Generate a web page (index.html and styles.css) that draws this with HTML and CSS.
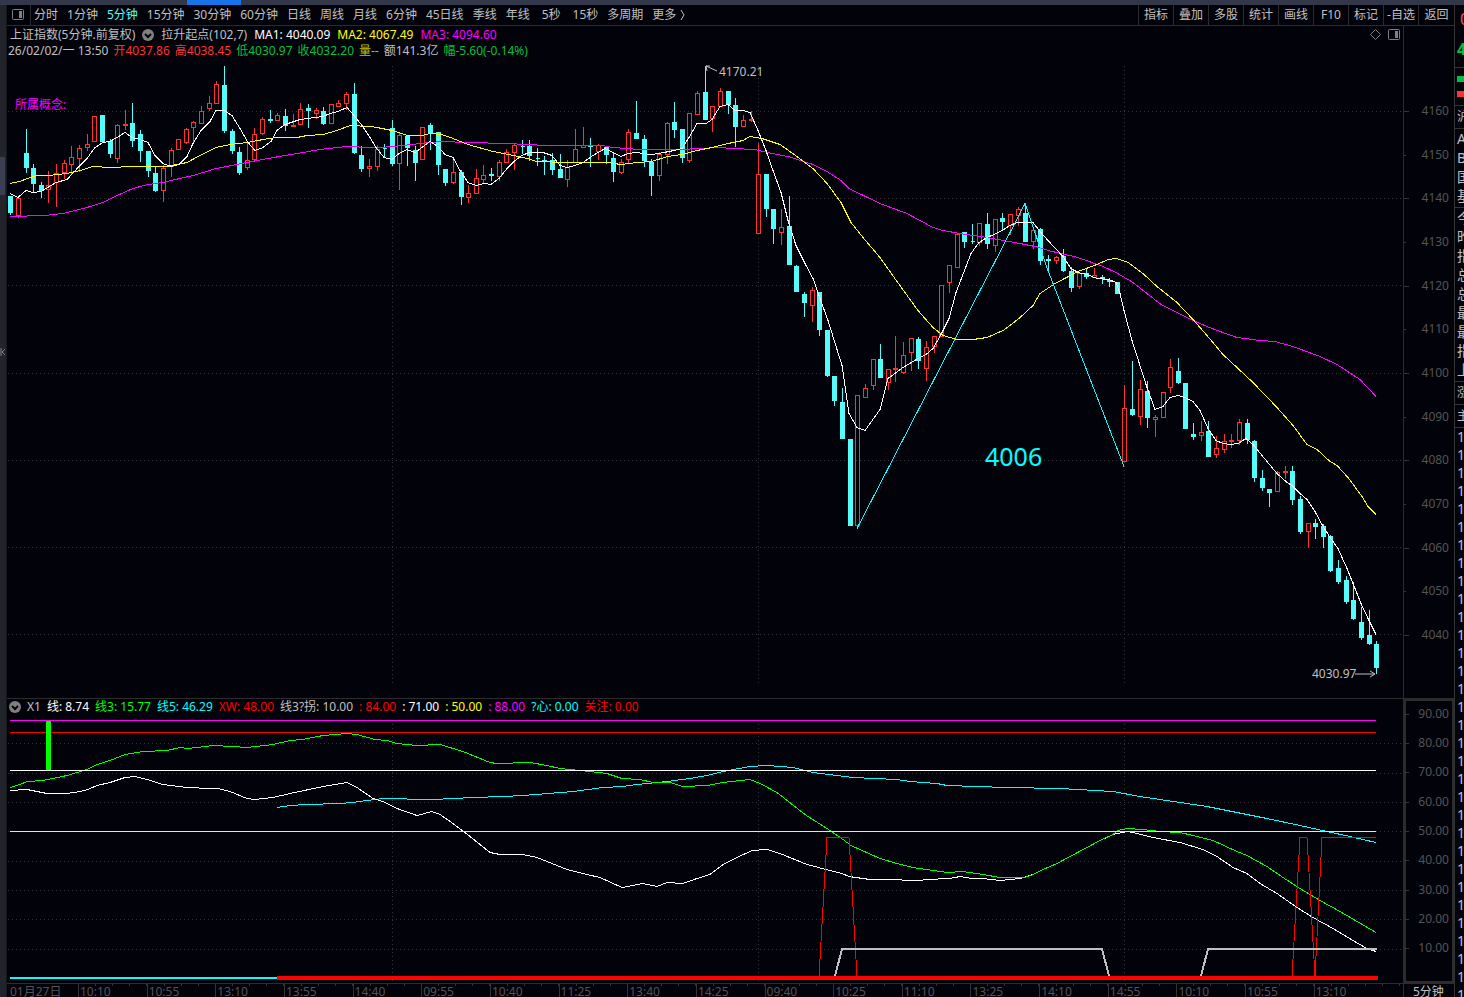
FILE: index.html
```html
<!doctype html>
<html lang="zh-CN">

<head>
    <meta charset="utf-8">
    <title>上证指数 5分钟</title>
    <link rel="stylesheet" href="styles.css">
</head>

<body>
    <div class="tabstrip"><div class="tabstrip_active"></div></div>
    <div class="layout">
        <div class="rail">
            <div class="rail_handle"></div>
            <svg class="rail_close" viewBox="0 0 6 8"><path d="M1 0v8M5 1L2 4l3 3"/></svg>
        </div>

        <main class="main">
            <nav class="toolbar">
                <button class="panel_toggle" aria-label="侧栏">
                    <svg width="12" height="12" viewBox="0 0 12 12"><rect x=".5" y=".5" width="11" height="10" rx="1"/><rect class="fill" x="7" y="2" width="3" height="7"/></svg>
                </button>
                <div class="periods">
                    <button>分时</button>
                    <button>1分钟</button>
                    <button class="active">5分钟</button>
                    <button>15分钟</button>
                    <button>30分钟</button>
                    <button>60分钟</button>
                    <button>日线</button>
                    <button>周线</button>
                    <button>月线</button>
                    <button>6分钟</button>
                    <button>45日线</button>
                    <button>季线</button>
                    <button>年线</button>
                    <button class="seconds">5秒</button>
                    <button class="seconds">15秒</button>
                    <button>多周期</button>
                    <button class="more">更多<svg width="5" height="10" viewBox="0 0 5 10"><path d="M1 0l3 5-3 5"/></svg></button>
                </div>
                <div class="tools">
                    <button>指标</button>
                    <button>叠加</button>
                    <button>多股</button>
                    <button>统计</button>
                    <button>画线</button>
                    <button>F10</button>
                    <button>标记</button>
                    <button>-自选</button>
                    <button>返回</button>
                </div>
            </nav>

            <section class="pane">
                <div class="plot">
                    <div class="info">
                        <div class="info_row title_row">
                            <span>上证指数(5分钟.前复权)</span>
                            <svg class="drop" width="12" height="12" viewBox="0 0 12 12"><circle cx="6" cy="6" r="6"/><path d="M3 5l3 3 3-3"/></svg>
                            <span class="study">拉升起点(102,7)</span>
                            <span class="white">MA1: 4040.09</span>
                            <span class="yellow">MA2: 4067.49</span>
                            <span class="magenta">MA3: 4094.60</span>
                            <span class="info_icons">
                                <svg width="11" height="11" viewBox="0 0 11 11"><path d="M5.5 .5l5 5-5 5-5-5z"/></svg>
                                <svg width="12" height="12" viewBox="0 0 12 12"><rect x=".5" y=".5" width="11" height="10" rx="1"/><rect class="fill" x="7" y="2" width="3" height="7"/></svg>
                            </span>
                        </div>
                        <div class="info_row quote_row">
                            <span>26/02/02/一 13:50</span>
                            <span class="up">开4037.86</span>
                            <span class="up">高4038.45</span>
                            <span class="down">低4030.97</span>
                            <span class="down">收4032.20</span>
                            <span class="vol">量--</span>
                            <span>额141.3亿</span>
                            <span class="down">幅-5.60(-0.14%)</span>
                        </div>
                    </div>
                    <svg class="chart" id="price" viewBox="7 60 1396 638">
                        <g class="grid"></g>
                        <g class="candles"></g>
                        <g class="lines"></g>
                        <path class="pointer" d="M706 66l11 5M706 66l4 0M706 66l1 5"/>
                        <path class="pointer" d="M1355 674h20M1370 671l5 3-5 3"/>
                        <text class="mark" x="719" y="76">4170.21</text>
                        <text class="mark" x="1312" y="678">4030.97</text>
                        <text class="target" x="985" y="466">4006</text>
                        <text class="concept" x="15" y="109">所属概念:</text>
                    </svg>
                </div>
                <div class="axis price_axis">
                    <span>4160</span><span>4150</span><span>4140</span><span>4130</span><span>4120</span><span>4110</span><span>4100</span><span>4090</span><span>4080</span><span>4070</span><span>4060</span><span>4050</span><span>4040</span>
                </div>
            </section>

            <section class="pane">
                <div class="plot">
                    <div class="info_row study_row">
                        <svg class="drop" width="12" height="12" viewBox="0 0 12 12"><circle cx="6" cy="6" r="6"/><path d="M3 5l3 3 3-3"/></svg>
                        <span>X1</span>
                        <span class="white">线: 8.74</span>
                        <span class="green">线3: 15.77</span>
                        <span class="cyan">线5: 46.29</span>
                        <span class="red">XW: 48.00</span>
                        <span>线3?拐: 10.00</span>
                        <span class="red">: 84.00</span>
                        <span class="white">: 71.00</span>
                        <span class="yellow">: 50.00</span>
                        <span class="magenta">: 88.00</span>
                        <span class="cyan">?心: 0.00</span>
                        <span class="red">关注: 0.00</span>
                    </div>
                    <svg class="chart" id="study" viewBox="7 716 1396 267">
                        <g class="grid"></g>
                        <g class="lines"></g>
                    </svg>
                </div>
                <div class="axis study_axis">
                    <span>90.00</span><span>80.00</span><span>70.00</span><span>60.00</span><span>50.00</span><span>40.00</span><span>30.00</span><span>20.00</span><span>10.00</span>
                </div>
            </section>

            <footer class="times">
                <div class="time_cells">
                    <span>01月27日</span><span>10:10</span><span>10:55</span><span>13:10</span><span>13:55</span><span>14:40</span><span>09:55</span><span>10:40</span><span>11:25</span><span>13:40</span><span>14:25</span><span>09:40</span><span>10:25</span><span>11:10</span><span>13:25</span><span>14:10</span><span>14:55</span><span>10:10</span><span>10:55</span><span>13:10</span>
                </div>
                <div class="period_label">5分钟</div>
            </footer>
        </main>

        <aside class="quotes">
            <div class="q_head"><span class="q_code">0</span><span class="q_last">4</span></div>
            <div class="q_bars"><i class="bar_down"></i><i class="bar_up"></i></div>
            <div class="q_one">沪</div>
            <div class="q_list"><span>A</span><span>B</span><span>国</span><span>基</span></div>
            <div class="q_list"><span>今</span><span>昨</span><span>指</span><span>总</span><span>总</span><span>最</span><span>最</span><span>指</span><span>上</span></div>
            <div class="q_one">涨</div>
            <div class="q_one">主</div>
            <div class="q_ticks" id="ticks"></div>
        </aside>
    </div>
    <script src="chart.js"></script>
</body>

</html>
```

FILE: styles.css
```css
* {
    box-sizing: border-box;
}

body {
    margin: 0;
    height: 100vh;
    overflow: hidden;
    background: #02020a;
    color: #c0c0c0;
    font-family: "Noto Sans", "Noto Sans CJK SC", sans-serif;
    font-size: 12px;
    line-height: 16px;
}

button {
    margin: 0;
    padding: 0;
    border: 0;
    background: none;
    color: inherit;
    font: inherit;
    white-space: nowrap;
}

svg {
    display: block;
    flex: none;
    fill: none;
    stroke: #808080;
}

svg .fill {
    fill: #808080;
    stroke: none;
}

.tabstrip {
    height: 5px;
    padding-left: 187px;
    background: #32384a;
}

.tabstrip_active {
    width: 54px;
    height: 5px;
    background: #1674e6;
}

.layout {
    display: grid;
    grid-template-columns: 7px minmax(0, 1fr) 10px;
}

.rail {
    background: #22242c;
    border-right: 1px solid #18181c;
    overflow: hidden;
}

.rail_handle {
    width: 5px;
    height: 38px;
    margin-top: 152px;
    background: #3a3e52;
}

.rail_close {
    width: 6px;
    height: 8px;
    margin-top: 153px;
}

/* toolbar */
.toolbar {
    display: flex;
    height: 21px;
    border-bottom: 1px solid #2c2c2c;
}

.panel_toggle {
    width: 24px;
    padding-left: 5px;
    border-right: 1px solid #2c2c2c;
}

.periods {
    display: flex;
    gap: 9px;
    padding-left: 3px;
}

.seconds {
    padding-left: 3px;
}

.periods .active {
    color: #54fcfc;
}

.more {
    display: flex;
    align-items: center;
    gap: 4px;
}

.more svg {
    stroke: #c0c0c0;
}

.tools {
    display: flex;
    margin-left: auto;
}

.tools button {
    width: 35px;
    border-left: 1px solid #2c2c2c;
}

.tools button:last-child {
    width: 36px;
}

/* panes */
.pane {
    display: grid;
    grid-template-columns: minmax(0, 1fr) 51px;
    border-bottom: 1px solid #2c2c2c;
}

.info {
    padding-top: 1px;
    height: 34px;
}

.info_row {
    display: flex;
    align-items: center;
    height: 16px;
    white-space: nowrap;
}

.title_row {
    gap: 7px;
    padding-left: 3px;
}

.quote_row {
    gap: 5px;
    padding-left: 1px;
}

.study_row {
    gap: 6px;
    height: 17px;
    padding: 0 0 1px 2px;
}

.drop circle {
    fill: #808080;
    stroke: none;
}

.drop path {
    stroke: #02020a;
    stroke-width: 2;
}

.info_icons {
    display: flex;
    gap: 7px;
    margin-left: auto;
    padding-right: 3px;
}

.white { color: #fff; }
.yellow { color: #ff0; }
.magenta { color: #f0f; }
.green { color: #0f0; }
.cyan { color: #0ff; }
.red { color: #f00; }
.up { color: #ff3232; }
.down { color: #00c040; }
.vol { color: #c0c000; }

.chart {
    width: 100%;
    height: auto;
    shape-rendering: crispEdges;
}

.grid {
    stroke: #343434;
    stroke-dasharray: 1 3;
}

.candles .u {
    stroke: #ff3232;
}

.candles .d {
    stroke: #54fcfc;
    fill: #54fcfc;
}

.pointer {
    stroke: #c0c0c0;
    shape-rendering: auto;
}

.chart text {
    stroke: none;
    fill: #c0c0c0;
}

.chart .target {
    fill: #0ff;
    font-size: 25px;
}

.chart .concept {
    fill: #f0f;
}

.axis {
    display: grid;
    grid-auto-rows: 1fr;
    align-items: center;
    border-left: 1px solid #2c2c2c;
    color: #545454;
    text-align: right;
}

.axis span {
    position: relative;
    padding-right: 5px;
}

.axis span::before {
    content: "";
    position: absolute;
    left: 0;
    top: 8px;
    width: 5px;
    height: 1px;
    background: #343434;
}

.price_axis {
    padding: 63px 0 41px;
}

.price_axis span:nth-child(even)::before {
    width: 2px;
}

.study_axis {
    padding-bottom: 20px;
    box-shadow: inset 0 0 0 2px #2c2c2c;
}

/* time axis */
.times {
    display: grid;
    grid-template-columns: minmax(0, 1fr) 51px;
    color: #545454;
}

.time_cells {
    display: grid;
    grid-template-columns: 71px repeat(18, minmax(0, 1fr)) minmax(0, 1.3fr);
}

.time_cells span {
    padding-left: 1px;
    border-left: 1px solid #343434;
    background: linear-gradient(90deg, transparent 16px, #343434 16px) 0 0 / 17px 2px repeat-x;
}

.time_cells span:first-child {
    padding-left: 3px;
    border: 0;
    background: none;
}

.period_label {
    border-left: 1px solid #2c2c2c;
    padding-left: 9px;
    color: #c0c0c0;
}

/* quote board, only its left edge is on screen */
.quotes {
    height: calc(100vh - 5px);
    overflow: hidden;
    border-left: 1px solid #343434;
    white-space: nowrap;
}

.quotes > div {
    padding-left: 2px;
    border-bottom: 1px solid #343434;
}

.q_head {
    display: grid;
    height: 63px;
    padding-top: 2px;
    font-size: 16px;
    line-height: 25px;
}

.q_code {
    padding-left: 3px;
    color: #ff5050;
}

.q_last {
    color: #00c040;
    font-weight: bold;
}

.q_bars {
    display: grid;
    gap: 9px;
    height: 38px;
    padding-top: 8px;
    align-content: start;
}

.q_bars i {
    height: 6px;
}

.bar_down {
    background: #00c040;
}

.bar_up {
    background: #ff3232;
}

.q_one {
    height: 23px;
    line-height: 22px;
}

.q_list {
    display: grid;
    padding-bottom: 2px;
    font-size: 14px;
    line-height: 19px;
}

.q_ticks {
    font-size: 14px;
    line-height: 18px;
}

.q_ticks span {
    display: block;
}
```

FILE: chart.js
```javascript
var NS = "http://www.w3.org/2000/svg";

// direction, high, body top, body bottom, low
var candles = `
d 196 196 213 215|u 198 198 216 218|d 129 153 168 173|d 164 168 184 192|d 182 185 191 198|u 171 185 190 203
u 164 173 183 207|u 160 163 173 179|u 146 157 165 174|u 145 148 159 172|u 134 144 148 151|u 116 116 142 142
d 115 115 142 142|d 139 141 154 158|u 124 125 159 163|u 110 124 126 130|d 103 123 141 147|d 130 134 151 162
d 151 151 171 177|d 167 173 191 192|u 165 168 191 202|u 148 150 167 177|u 139 139 150 150|u 128 129 143 144
u 121 122 128 142|u 106 111 124 124|u 96 103 109 111|u 81 84 104 104|d 66 85 131 133|d 129 131 151 154
d 147 152 173 175|u 142 160 168 170|u 128 134 160 161|u 117 119 134 135|d 110 119 121 123|u 113 115 121 121
d 109 116 126 131|u 114 125 127 127|u 103 109 125 125|d 104 108 111 128|u 108 110 114 119|d 107 111 124 125
u 104 104 124 124|u 100 103 107 107|u 92 94 104 110|d 83 94 153 154|d 146 155 169 172|u 159 166 169 177
u 145 149 167 171|d 144 148 149 157|d 120 128 164 166|u 132 135 164 190|d 136 136 148 166|d 146 150 163 181
u 127 127 160 160|d 123 125 133 150|d 132 132 165 175|d 169 169 183 186|u 160 172 183 184|d 170 172 197 205
u 185 193 198 203|u 169 178 194 194|u 165 175 180 183|d 168 174 176 181|u 160 162 177 181|u 149 152 163 163
u 144 145 153 170|d 140 146 147 154|d 140 146 156 161|d 148 158 159 166|d 156 160 162 175|d 153 160 170 175
d 154 169 178 178|u 160 167 180 187|u 129 149 163 163|u 127 145 148 148|d 138 145 147 167|u 144 145 152 160
d 146 147 155 164|d 153 158 172 182|u 159 162 173 174|u 129 132 160 163|d 101 133 139 139|d 135 139 161 167
d 159 162 176 196|u 152 154 176 181|u 122 123 155 164|d 102 122 130 138|d 129 129 158 163|u 113 113 161 163
u 91 93 115 115|d 66 92 120 120|u 106 106 119 132|u 88 91 107 107|d 91 91 105 114|d 98 105 127 147
u 115 120 127 127|u 111 119 121 122|u 143 174 234 234|d 174 174 209 217|d 209 209 229 244|u 209 227 233 245
d 196 226 265 265|d 265 266 292 292|d 292 294 303 317|u 287 290 306 322|d 292 292 330 336|d 330 330 376 377
d 376 376 401 406|d 388 402 439 439|d 439 439 526 526|u 395 395 526 526|u 384 388 398 398|u 359 359 386 390
d 344 359 378 378|u 369 369 383 390|u 336 368 370 382|u 342 355 373 374|u 338 338 353 371|d 337 339 361 369
u 341 347 369 381|u 336 336 347 353|u 285 285 337 337|u 265 265 283 293|u 234 234 268 268|d 232 232 242 248
d 224 241 242 244|u 223 223 243 246|d 213 224 244 249|u 219 219 246 252|d 213 218 222 230|u 214 214 226 235
u 207 209 216 226|d 203 213 242 242|u 230 230 242 249|d 228 229 261 265|d 255 259 261 270|u 256 257 261 264
d 249 256 271 272|d 267 271 288 292|u 272 273 287 289|d 269 273 277 279|u 268 275 278 278|d 275 277 279 284
d 278 280 282 287|d 282 282 294 294|u 385 408 462 462|d 361 409 415 416|u 380 389 417 425|d 381 391 418 428
u 415 417 420 437|u 392 392 418 418|u 359 367 388 393|d 358 371 383 384|d 383 383 429 429|d 423 434 437 440
u 421 432 436 441|d 421 431 457 457|u 436 448 455 458|u 434 441 450 453|u 434 440 442 448|u 419 422 441 445
d 419 423 440 444|d 440 441 478 482|d 470 478 488 491|d 489 489 493 507|u 471 472 492 492|u 466 471 473 479
d 466 471 500 505|d 496 499 532 534|u 523 523 532 548|d 519 523 527 539|d 524 526 537 548|d 535 536 571 572
d 560 568 582 584|d 576 580 602 604|d 582 600 619 620|d 607 622 638 640|d 610 635 644 645|d 641 644 668 674`
    .trim().split(/[|\n]/).map(function (row) { return row.split(" "); });

var priceLines = [
    ["#f0f", "10,216 45,215 63,213 87,207 103,202 117,195 133,188 148,184 163,182 171,180 193,175 203,172 216,168 232,165 257,160 285,155 303,152 320,149 347,146 370,147 380,147 403,145 430,142 442,141 468,142 507,143 547,145 602,145 613,147 640,149 680,149 720,147 732,148 755,149 772,153 788,156 813,164 827,171 841,180 849,188 880,203 907,213 933,227 943,230 960,233 987,237 1020,243 1040,247 1048,250 1078,257 1103,266 1116,272 1133,282 1147,293 1161,304 1173,310 1193,320 1207,326 1220,331 1237,337 1260,340 1275,341 1293,346 1320,356 1337,364 1360,379 1376,396"],
    ["#ff0", "10,183 20,181 27,178 37,175 48,175 67,173 80,170 93,166 110,167 133,166 167,166 187,162 200,155 216,147 230,144 248,142 263,139 277,137 297,137 307,135 323,134 337,130 350,125 370,126 377,127 392,130 408,135 422,135 430,133 442,134 453,138 468,144 493,151 514,155 527,158 537,161 567,162 607,162 621,164 637,162 651,161 668,156 682,154 697,150 712,147 728,143 743,140 750,136 762,138 780,144 797,156 813,168 827,183 841,202 851,222 863,237 880,257 897,281 918,310 933,327 943,335 957,339 973,339 987,337 1003,330 1010,325 1020,317 1033,305 1040,293 1055,283 1078,271 1097,264 1108,259 1117,258 1128,262 1143,273 1157,286 1177,302 1193,319 1207,335 1223,354 1253,382 1277,407 1293,425 1307,444 1317,449 1330,461 1337,465 1348,477 1362,496 1368,506 1376,514"],
    ["#fff", "10,193 18,197 26,190 33,192 41,191 56,182 67,179 79,166 87,158 95,147 103,142 110,141 117,137 125,132 132,137 140,139 148,142 155,155 163,163 171,166 179,164 187,156 193,143 201,130 210,121 216,110 224,110 232,115 240,128 248,142 255,150 263,147 271,141 277,130 285,124 300,119 315,117 323,116 330,113 338,111 347,107 354,115 362,125 370,137 376,147 384,157 392,159 399,153 407,149 415,152 422,147 430,141 438,146 445,154 453,157 460,170 468,182 476,185 484,183 491,184 499,178 507,168 514,161 522,155 529,152 543,152 552,155 560,165 567,167 575,165 583,162 593,155 605,148 613,152 621,156 628,153 636,152 651,154 659,153 674,150 682,148 689,137 697,123 706,123 712,119 720,106 728,104 735,110 743,110 750,112 758,130 766,150 773,170 781,192 788,220 796,245 805,263 813,278 819,295 828,320 842,365 849,413 857,427 865,430 880,409 888,378 903,367 918,358 926,354 933,348 941,334 949,318 956,292 971,253 979,242 987,237 994,234 1002,230 1010,225 1017,222 1033,222 1040,231 1048,240 1063,256 1071,268 1078,272 1087,274 1097,278 1109,279 1116,282 1120,293 1124,310 1132,340 1147,387 1155,409 1163,406 1170,397 1178,395 1185,397 1193,401 1200,410 1208,428 1216,440 1223,443 1231,444 1238,443 1246,438 1254,445 1262,455 1277,473 1287,482 1292,485 1300,493 1307,499 1315,511 1322,524 1330,537 1338,548 1347,568 1353,583 1361,603 1368,618 1376,634"],
    ["#0ff", "857,528 1025,203 1048,270 1124,466"]
];

var studyLines = [
    ["#0ff", "277,807 290,805 307,804 340,803 353,802 367,800 383,798 400,798 413,799 433,799 473,797 503,796 523,795 573,791 603,787 623,786 637,784 667,781 690,778 707,775 723,771 750,766 767,765 793,767 813,772 853,777 897,779 910,781 937,783 947,785 977,786 1007,787 1060,788 1113,791 1140,796 1160,799 1207,806 1267,818 1300,825 1327,831 1350,836 1376,842"],
    ["#fff", "10,790 27,789 47,793 67,793 80,791 88,789 97,785 110,782 125,777 135,776 147,779 163,784 187,787 210,788 218,788 230,791 247,798 255,799 273,797 290,793 323,786 347,782 357,787 373,798 383,801 397,808 417,815 432,811 440,814 453,823 470,836 490,852 500,854 523,854 537,857 567,869 587,874 600,877 622,887 643,883 657,886 667,882 683,883 697,878 710,874 723,864 737,857 752,850 767,849 780,853 807,864 830,870 842,873 849,876 870,879 897,879 907,880 920,880 927,879 950,878 960,876 972,878 983,878 1000,880 1020,878 1033,874 1043,869 1057,863 1070,856 1100,840 1113,834 1127,831 1133,832 1153,837 1180,842 1203,849 1217,856 1233,867 1247,873 1260,883 1277,893 1297,907 1313,917 1333,928 1353,940 1367,948 1376,951"],
    ["#0f0", "10,787 20,784 27,781 43,780 67,775 77,772 87,769 97,764 110,760 125,754 143,751 167,750 180,747 187,748 197,747 213,745 233,746 247,747 273,744 290,740 303,739 323,735 347,733 357,734 375,739 387,740 397,743 417,745 440,744 463,751 490,762 497,763 530,762 547,765 560,768 580,770 607,773 622,778 640,779 653,782 670,782 683,786 707,785 723,782 750,779 760,783 777,792 805,814 827,828 843,839 851,845 880,858 897,863 913,867 947,872 963,871 983,874 1000,877 1025,877 1033,874 1043,869 1057,863 1070,856 1100,840 1113,834 1118,830 1127,828 1143,829 1160,831 1180,832 1193,835 1213,840 1237,851 1247,855 1267,866 1283,877 1300,888 1320,900 1340,911 1376,932"],
    ["#f00", "819,976 827,837 849,837 857,976"],
    ["#f00", "1292,976 1300,837 1307,837 1315,976 1322,837 1376,837"],
    ["#c0c0c0", "835,976 842,949 1102,949 1109,976", 2],
    ["#c0c0c0", "1201,976 1208,949 1377,949", 2],
    ["#f0f", "10,720 1376,720"],
    ["#f00", "10,732 1376,732"],
    ["#fff", "10,770 1376,770"],
    ["#ff0", "10,831 1376,831"],
    ["#0f0", "48.5,721 48.5,770", 5],
    ["#0ff", "10,978 277,978", 2],
    ["#f00", "277,978 1378,978", 4]
];

function add(parent, name, attrs) {
    var el = document.createElementNS(NS, name);
    for (var key in attrs) el.setAttribute(key, attrs[key]);
    parent.appendChild(el);
}

function drawGrid(svg, rows, top, bottom) {
    var g = svg.querySelector(".grid");
    rows.forEach(function (y) {
        add(g, "path", { d: "M8 " + (y + 0.5) + "H1402" });
    });
    [392, 758, 1124].forEach(function (x) {
        add(g, "path", { d: "M" + (x + 0.5) + " " + top + "V" + bottom });
    });
}

function drawLines(svg, lines) {
    var g = svg.querySelector(".lines");
    lines.forEach(function (line) {
        var width = line[2] || 1;
        add(g, "polyline", {
            points: line[1],
            stroke: line[0],
            "stroke-width": width,
            transform: width == 1 ? "translate(0 .5)" : ""
        });
    });
}

function drawCandles(svg) {
    var g = svg.querySelector(".candles");
    candles.forEach(function (c, i) {
        var x = Math.round(10.3 + i * 7.631) + 0.5;
        var top = +c[2] + 0.5, bottom = Math.max(+c[3] - 0.5, top);
        add(g, "path", {
            "class": c[0],
            d: "M" + x + " " + c[1] + "V" + c[2] + "M" + x + " " + c[3] + "V" + c[4] +
                "M" + (x - 2) + " " + top + "h4V" + bottom + "h-4z"
        });
    });
}

var price = document.getElementById("price");
var study = document.getElementById("study");

drawGrid(price, [111, 198, 285, 373, 460, 547, 634], 66, 684);
drawCandles(price);
drawLines(price, priceLines);

drawGrid(study, [743, 773, 802, 831, 861, 890, 919, 949], 724, 982);
drawLines(study, studyLines);

var ticks = document.getElementById("ticks");
for (var n = 0; n < 32; n++) {
    ticks.appendChild(document.createElement("span")).textContent = "1";
}
```
